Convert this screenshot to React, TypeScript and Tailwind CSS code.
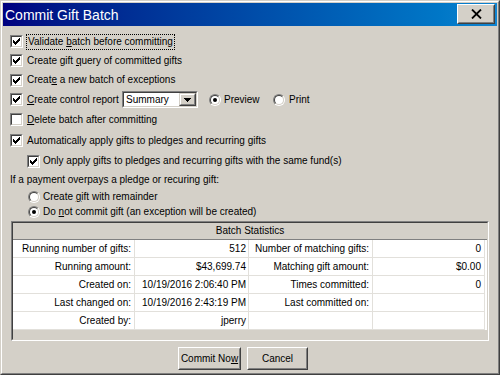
import React from "react";

function CheckBox({ checked }: { checked: boolean }) {
  return (
    <div className="w-[13px] h-[13px] shrink-0 border border-t-[#808080] border-l-[#808080] border-r-white border-b-white">
      <div className="w-full h-full border border-t-[#404040] border-l-[#404040] border-r-[#d4d0c8] border-b-[#d4d0c8] bg-white">
        {checked && (
          <svg width="9" height="9" viewBox="0 0 9 9" className="block" shapeRendering="crispEdges">
            <path
              d="M7 1h1v3h-1zM6 2h1v3h-1zM5 3h1v3h-1zM4 4h1v3h-1zM3 5h1v3h-1zM2 4h1v3h-1zM1 3h1v3h-1z"
              fill="#000"
            />
          </svg>
        )}
      </div>
    </div>
  );
}

function Radio({ checked }: { checked: boolean }) {
  return (
    <div className="w-[12px] h-[12px] shrink-0 rounded-full border border-t-[#808080] border-l-[#808080] border-r-white border-b-white">
      <div className="w-full h-full rounded-full border border-t-[#404040] border-l-[#404040] border-r-[#d4d0c8] border-b-[#d4d0c8] bg-white flex items-center justify-center">
        {checked && <div className="w-[4px] h-[4px] rounded-full bg-black" />}
      </div>
    </div>
  );
}

function U({ children }: { children: React.ReactNode }) {
  return <span className="underline underline-offset-[1px]">{children}</span>;
}

function Row({ h, pl, children }: { h: string; pl: string; children: React.ReactNode }) {
  return <div className={`flex items-center whitespace-nowrap ${h} ${pl}`}>{children}</div>;
}

function Button({ w, children }: { w: string; children: React.ReactNode }) {
  return (
    <div className={`${w} h-[23px] border border-t-white border-l-white border-r-[#404040] border-b-[#404040]`}>
      <div className="w-full h-full border border-t-[#d4d0c8] border-l-[#d4d0c8] border-r-[#808080] border-b-[#808080] flex items-center justify-center text-[10px] whitespace-nowrap">
        {children}
      </div>
    </div>
  );
}

const stats: [string, string, string, string][] = [
  ["Running number of gifts:", "512", "Number of matching gifts:", "0"],
  ["Running amount:", "$43,699.74", "Matching gift amount:", "$0.00"],
  ["Created on:", "10/19/2016 2:06:40 PM", "Times committed:", "0"],
  ["Last changed on:", "10/19/2016 2:43:19 PM", "Last committed on:", ""],
  ["Created by:", "jperry", "", ""],
];

export default function App() {
  return (
    <div className="w-[500px] h-[375px] bg-[#d4d0c8] border border-t-[#d4d0c8] border-l-[#d4d0c8] border-r-[#404040] border-b-[#404040] font-['Liberation_Sans',Arial,sans-serif] text-[10px] text-black leading-none select-none">
      <div className="w-full h-full border border-t-white border-l-white border-r-[#808080] border-b-[#808080] p-px flex flex-col">
        {/* Title bar */}
        <div className="h-[23px] shrink-0 bg-gradient-to-r from-[#000080] to-[#1084d0] flex items-start justify-between pt-px pr-[2px]">
          <div className="text-white text-[14px] pl-[2px] pt-[4px]">Commit Gift Batch</div>
          <div className="w-[38px] h-[20px] border border-t-white border-l-white border-r-[#404040] border-b-[#404040] bg-[#d4d0c8]">
            <div className="w-full h-full border border-t-[#d4d0c8] border-l-[#d4d0c8] border-r-[#808080] border-b-[#808080] flex items-center justify-center">
              <svg width="11" height="10" viewBox="0 0 11 10">
                <path d="M1 0.5L10 9.5M10 0.5L1 9.5" stroke="#000" strokeWidth="1.8" />
              </svg>
            </div>
          </div>
        </div>

        <div className="h-[6px]" />
        <Row h="h-[19px]" pl="pl-[7px]">
          <CheckBox checked />
          <span className="ml-[3px] border border-dotted border-black px-px py-[2px]">
            Validate <U>b</U>atch before committing
          </span>
        </Row>
        <Row h="h-[19px]" pl="pl-[7px]">
          <CheckBox checked />
          <span className="ml-[4px]">
            Create gift <U>q</U>uery of committed gifts
          </span>
        </Row>
        <Row h="h-[20px]" pl="pl-[7px]">
          <CheckBox checked />
          <span className="ml-[4px]">
            Creat<U>e</U> a new batch of exceptions
          </span>
        </Row>
        <Row h="h-[19px]" pl="pl-[7px]">
          <CheckBox checked />
          <span className="ml-[4px] w-[95px] shrink-0">
            <U>C</U>reate control report
          </span>
          <div className="w-[76px] h-[17px] shrink-0 border border-t-[#808080] border-l-[#808080] border-r-white border-b-white">
            <div className="w-full h-full border border-t-[#404040] border-l-[#404040] border-r-[#d4d0c8] border-b-[#d4d0c8] bg-white flex items-center justify-between">
              <span className="pl-[2px]">Summary</span>
              <div className="w-[17px] h-[13px] bg-[#d4d0c8] border border-t-[#d4d0c8] border-l-[#d4d0c8] border-r-[#404040] border-b-[#404040]">
                <div className="w-full h-full border border-t-white border-l-white border-r-[#808080] border-b-[#808080] flex items-center justify-center">
                  <svg width="7" height="4" viewBox="0 0 7 4" shapeRendering="crispEdges">
                    <path d="M0 0h7L3.5 4z" fill="#000" />
                  </svg>
                </div>
              </div>
            </div>
          </div>
          <div className="ml-[11px] w-[64px] flex items-center shrink-0">
            <Radio checked />
            <span className="ml-[3px]">Preview</span>
          </div>
          <div className="flex items-center">
            <Radio checked={false} />
            <span className="ml-[4px]">Print</span>
          </div>
        </Row>
        <Row h="h-[21px]" pl="pl-[7px]">
          <CheckBox checked={false} />
          <span className="ml-[4px]">
            <U>D</U>elete batch after committing
          </span>
        </Row>
        <Row h="h-[21px]" pl="pl-[7px]">
          <CheckBox checked />
          <span className="ml-[4px]">Automatically apply gifts to pledges and recurring gifts</span>
        </Row>
        <Row h="h-[20px]" pl="pl-[24px]">
          <CheckBox checked />
          <span className="ml-[3px]">Only apply gifts to pledges and recurring gifts with the same fund(s)</span>
        </Row>
        <Row h="h-[18px]" pl="pl-[7px]">
          <span>If a payment overpays a pledge or recuring gift:</span>
        </Row>
        <Row h="h-[15px]" pl="pl-[25px]">
          <Radio checked={false} />
          <span className="ml-[3px]">
            Create <U>g</U>ift with remainder
          </span>
        </Row>
        <Row h="h-[15px]" pl="pl-[25px]">
          <Radio checked />
          <span className="ml-[3px]">
            Do <U>n</U>ot commit gift (an exception will be created)
          </span>
        </Row>

        {/* Batch statistics */}
        <div className="mt-[2px] ml-[8px] w-[478px] h-[120px] border border-t-[#808080] border-l-[#808080] border-r-white border-b-white">
          <div className="w-full h-full border border-t-[#404040] border-l-[#404040] border-r-[#d4d0c8] border-b-[#d4d0c8] flex flex-col">
            <div className="h-[17px] shrink-0 border-b border-b-[#808080] flex items-center justify-center">
              Batch Statistics
            </div>
            <div className="grid grid-cols-[122px_114px_124px_112px] bg-white whitespace-nowrap">
              {stats.map((r, i) => (
                <React.Fragment key={i}>
                  <div className="h-[18px] border-b border-r border-[#e2e0db] flex items-center justify-end pr-[3px]">{r[0]}</div>
                  <div className="h-[18px] border-b border-r border-[#e2e0db] flex items-center justify-end pr-[2px]">{r[1]}</div>
                  <div className="h-[18px] border-b border-r border-[#e2e0db] flex items-center justify-end pr-[3px]">{r[2]}</div>
                  <div className="h-[18px] border-b border-r border-[#e2e0db] flex items-center justify-end pr-[3px]">{r[3]}</div>
                </React.Fragment>
              ))}
            </div>
            <div className="flex-1" />
          </div>
        </div>

        <div className="mt-[6px] ml-[175px] flex gap-[6px]">
          <Button w="w-[63px]">
            <span>
              Commit No<U>w</U>
            </span>
          </Button>
          <Button w="w-[61px]">
            <span>Cancel</span>
          </Button>
        </div>
      </div>
    </div>
  );
}
